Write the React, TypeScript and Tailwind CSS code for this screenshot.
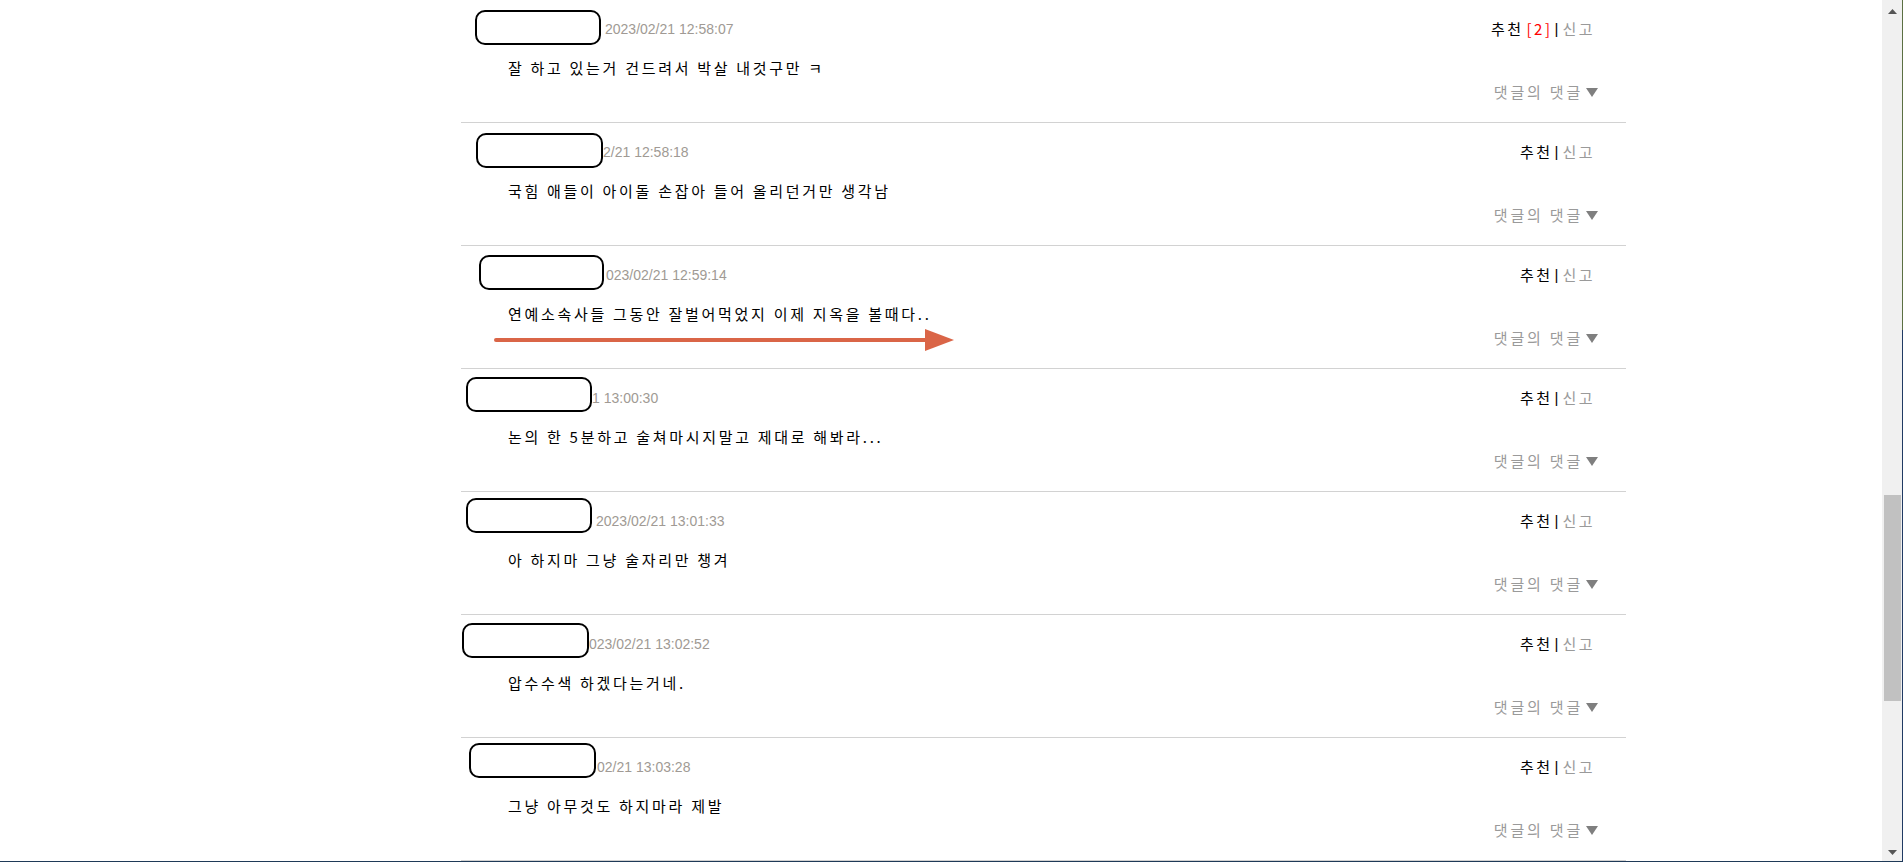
import React from 'react';

type Comment = {
  boxLeft: number;
  boxTop: number;
  boxWidth: number;
  tsLeft: number;
  ts: string;
  text: string;
  recommend?: number;
  arrow?: boolean;
};

const comments: Comment[] = [
  { boxLeft: 14, boxTop: 10, boxWidth: 126, tsLeft: 144, ts: '2023/02/21 12:58:07', text: '잘 하고 있는거 건드려서 박살 내것구만 ㅋ', recommend: 2 },
  { boxLeft: 15, boxTop: 10, boxWidth: 127, tsLeft: 142, ts: '2/21 12:58:18', text: '국힘 애들이 아이돌 손잡아 들어 올리던거만 생각남' },
  { boxLeft: 18, boxTop: 9, boxWidth: 125, tsLeft: 145, ts: '023/02/21 12:59:14', text: '연예소속사들 그동안 잘벌어먹었지 이제 지옥을 볼때다..', arrow: true },
  { boxLeft: 5, boxTop: 8, boxWidth: 126, tsLeft: 131, ts: '1 13:00:30', text: '논의 한 5분하고 술쳐마시지말고 제대로 해봐라...' },
  { boxLeft: 5, boxTop: 6, boxWidth: 126, tsLeft: 135, ts: '2023/02/21 13:01:33', text: '아 하지마 그냥 술자리만 챙겨' },
  { boxLeft: 1, boxTop: 8, boxWidth: 127, tsLeft: 128, ts: '023/02/21 13:02:52', text: '압수수색 하겠다는거네.' },
  { boxLeft: 8, boxTop: 5, boxWidth: 127, tsLeft: 136, ts: '02/21 13:03:28', text: '그냥 아무것도 하지마라 제발' },
];

const kr = "font-['Noto_Sans_CJK_KR','Noto_Sans',sans-serif]";

function CommentRow({ c }: { c: Comment }) {
  return (
    <div className="relative h-[123px] border-b border-[#d2d2d2] pt-[19px]">
      {/* 닉네임 가림 박스 */}
      <div
        className="absolute h-[35px] rounded-[10px] border-2 border-black bg-white"
        style={{ left: c.boxLeft, top: c.boxTop, width: c.boxWidth }}
      />

      <div className="flex h-[20px] items-center justify-between pr-[31px]">
        <span
          className="font-['Liberation_Sans',Arial,sans-serif] text-[14px] leading-[20px] text-[#a09a94]"
          style={{ paddingLeft: c.tsLeft }}
        >
          {c.ts}
        </span>
        <span className={`${kr} flex items-center text-[15px] leading-[20px] tracking-[2.5px]`}>
          <span className="text-black">추천</span>
          {c.recommend && <span className="ml-[3px] text-[#ff0000]">[{c.recommend}]</span>}
          <span className="mr-[4px] ml-[2px] font-['Liberation_Sans',sans-serif] tracking-normal text-black">|</span>
          <span className="text-[#9a9a9a]">신고</span>
        </span>
      </div>

      <p className={`${kr} ml-[47px] mt-[19px] text-[15px] leading-[20px] tracking-[2.7px] text-black`}>
        {c.text}
      </p>

      <div className="mt-[4px] flex h-[20px] items-center justify-end pr-[28px]">
        <span className={`${kr} text-[15px] leading-[20px] tracking-[2.8px] text-[#9a9a9a]`}>댓글의 댓글</span>
        <svg width="12" height="9" viewBox="0 0 12 9" className="ml-[3px]">
          <polygon points="0,0 12,0 6,9" fill="#7f7f7f" />
        </svg>
      </div>

      {c.arrow && (
        <svg width="462" height="24" viewBox="0 0 462 24" className="absolute left-[32px] top-[82px]">
          <line x1="3" y1="12" x2="436" y2="12" stroke="#da6547" strokeWidth="4" strokeLinecap="round" />
          <polygon points="432,1 461,12 432,23" fill="#da6547" />
        </svg>
      )}
    </div>
  );
}

export default function App() {
  return (
    <div className="flex h-[862px] w-full overflow-hidden border-b border-[#1f3a58] bg-white">
      <main className="flex-1 overflow-hidden">
        <div className="ml-[461px] w-[1165px]">
          {comments.map((c, i) => (
            <CommentRow key={i} c={c} />
          ))}
        </div>
      </main>

      {/* 스크롤바 */}
      <div className="flex w-[20px] flex-col items-center bg-[#f0f0f0]">
        <svg width="9" height="5" viewBox="0 0 9 5" className="mt-[9px]">
          <polygon points="0,5 9,5 4.5,0" fill="#555" />
        </svg>
        <div className="mt-[481px] ml-[1px] h-[206px] w-[17px] bg-[#c1c1c1]" />
        <div className="flex-1" />
        <svg width="9" height="5" viewBox="0 0 9 5" className="mb-[6px]">
          <polygon points="0,0 9,0 4.5,5" fill="#555" />
        </svg>
      </div>
      <div className="flex w-px flex-col">
        <div className="h-[330px] bg-[#5b7042]" />
        <div className="flex-1 bg-[#203a63]" />
      </div>
    </div>
  );
}
